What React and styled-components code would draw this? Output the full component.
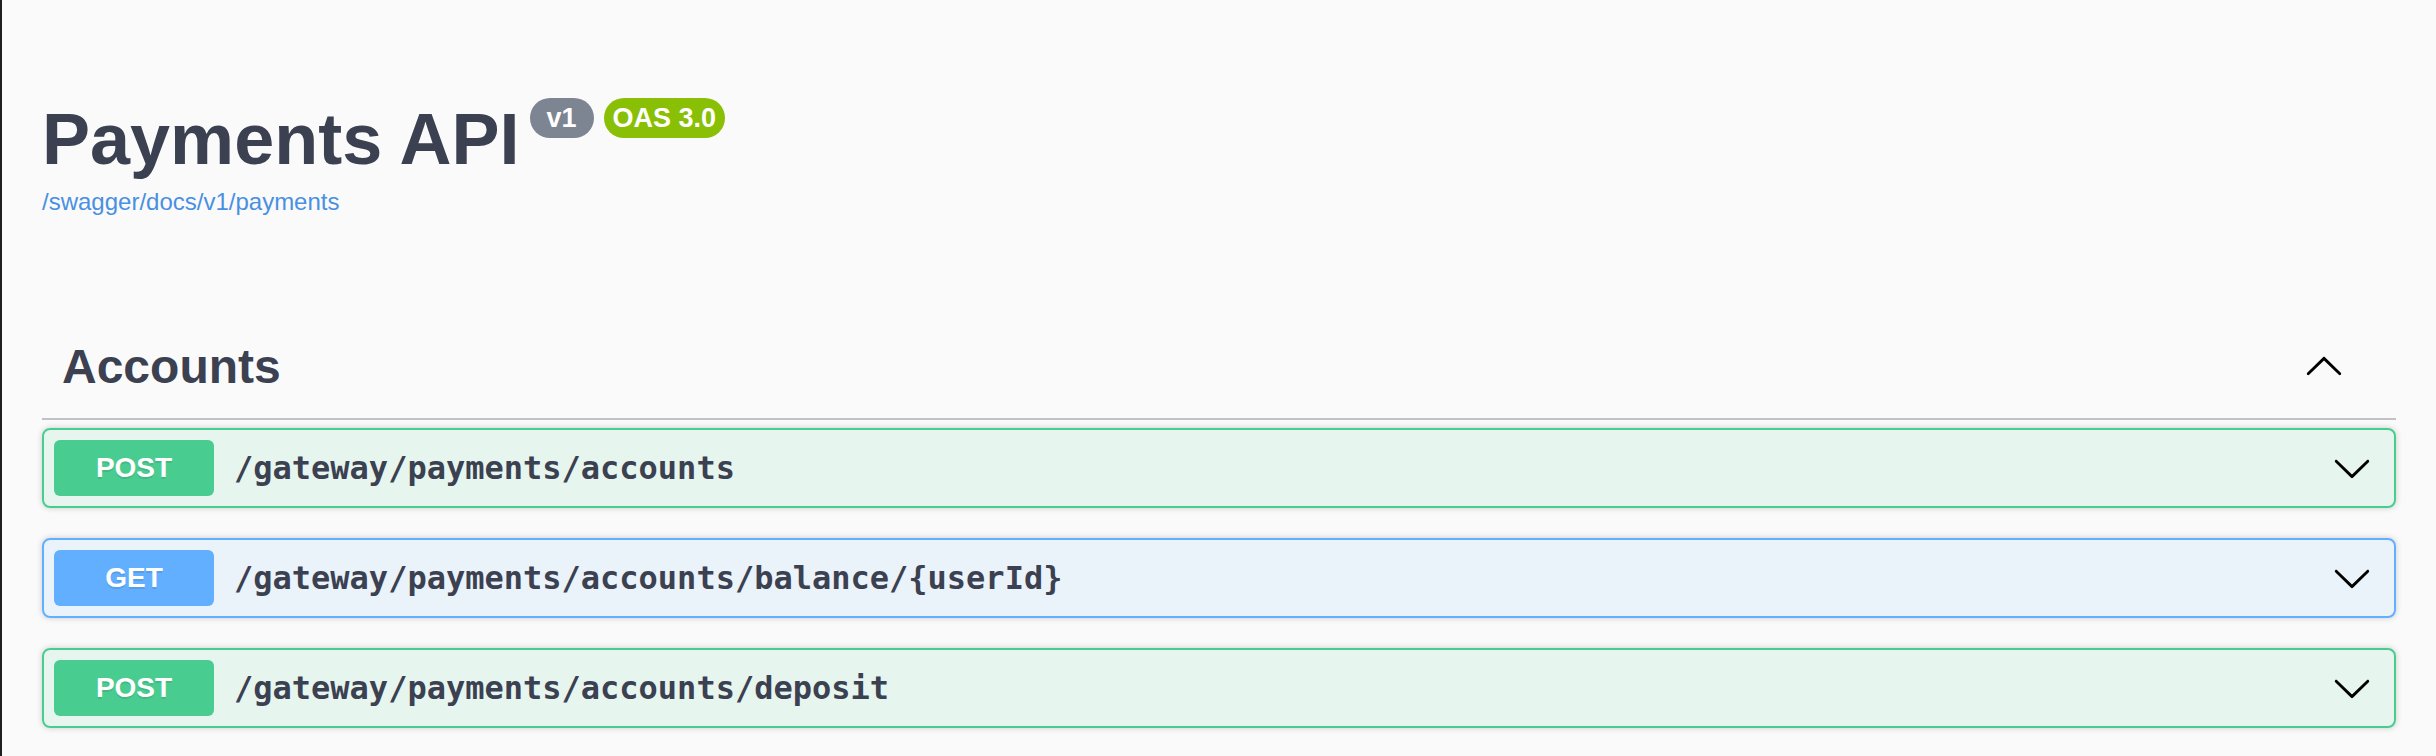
import React from 'react';
import styled, { createGlobalStyle } from 'styled-components';

const GlobalStyle = createGlobalStyle`
  html, body {
    margin: 0;
    padding: 0;
    background: #fafafa;
  }
  body {
    font-family: "Liberation Sans", Arial, sans-serif;
    color: #3b4151;
  }
`;

const operations = [
  { method: 'POST', path: '/gateway/payments/accounts' },
  { method: 'GET', path: '/gateway/payments/accounts/balance/{userId}' },
  { method: 'POST', path: '/gateway/payments/accounts/deposit' },
];

const methodColors = {
  POST: { main: '#49cc90', soft: 'rgba(73, 204, 144, 0.1)' },
  GET: { main: '#61affe', soft: 'rgba(97, 175, 254, 0.1)' },
};

const Arrow = ({ up }) => (
  <ArrowSvg viewBox="0 0 20 20" $up={up}>
    <path d="M17.418 6.109c.272-.268.709-.268.979 0s.271.701 0 .969l-7.908 7.83c-.27.268-.707.268-.979 0l-7.908-7.83c-.27-.268-.27-.701 0-.969.271-.268.709-.268.979 0L10 13.25l7.418-7.141z" />
  </ArrowSvg>
);

const App = () => {
  return (
    <Page>
      <GlobalStyle />
      <Wrapper>
        <Info>
          <Title>
            Payments API
            <Badge $bg="#7d8492" $pad="17px">v1</Badge>
            <Badge $bg="#89bf04" $pad="9px">OAS 3.0</Badge>
          </Title>
          <SpecLink href="#">/swagger/docs/v1/payments</SpecLink>
        </Info>

        <TagSection>
          <TagHeader>
            <TagName>Accounts</TagName>
            <ArrowButton>
              <Arrow up />
            </ArrowButton>
          </TagHeader>

          {operations.map((op) => (
            <OpBlock key={op.path} $color={methodColors[op.method]}>
              <Method $color={methodColors[op.method].main}>{op.method}</Method>
              <Path>{op.path}</Path>
              <ArrowButton>
                <Arrow />
              </ArrowButton>
            </OpBlock>
          ))}
        </TagSection>
      </Wrapper>
    </Page>
  );
};

const Page = styled.div`
  min-height: 100vh;
  border-left: 2px solid #1f1f1f;
  box-sizing: border-box;
`;

const Wrapper = styled.div`
  padding: 98px 40px 0 40px;
`;

const Info = styled.div`
  margin-bottom: 100px;
`;

const Title = styled.h2`
  display: flex;
  align-items: flex-start;
  margin: 0;
  font-size: 72px;
  line-height: 83px;
  font-weight: 700;
  color: #3b4151;
`;

const Badge = styled.small`
  margin-left: 10px;
  padding: 4px ${(p) => p.$pad};
  border-radius: 114px;
  background: ${(p) => p.$bg};
  color: #fff;
  font-size: 27px;
  line-height: 32px;
  font-weight: 700;
`;

const SpecLink = styled.a`
  display: block;
  margin-top: 7px;
  font-size: 24px;
  line-height: 28px;
  color: #4990e2;
  text-decoration: none;
`;

const TagSection = styled.div``;

const TagHeader = styled.div`
  display: flex;
  align-items: center;
  padding: 20px 40px 20px 20px;
  margin-bottom: 8px;
  border-bottom: 2px solid rgba(59, 65, 81, 0.3);
`;

const TagName = styled.h3`
  flex: 1;
  margin: 0;
  font-size: 48px;
  line-height: 62px;
  font-weight: 700;
  color: #3b4151;
`;

const ArrowButton = styled.button`
  display: flex;
  align-items: center;
  border: none;
  background: none;
  padding: 0 12px;
  cursor: pointer;
`;

const ArrowSvg = styled.svg`
  width: 40px;
  height: 40px;
  fill: #000;
  transform: ${(p) => (p.$up ? 'rotate(180deg)' : 'none')};
`;

const OpBlock = styled.div`
  display: flex;
  align-items: center;
  padding: 10px;
  margin-bottom: 30px;
  border: 2px solid ${(p) => p.$color.main};
  border-radius: 8px;
  background: ${(p) => p.$color.soft};
  box-shadow: 0 0 6px rgba(0, 0, 0, 0.19);
`;

const Method = styled.span`
  min-width: 160px;
  padding: 12px 0;
  border-radius: 6px;
  background: ${(p) => p.$color};
  color: #fff;
  font-size: 28px;
  line-height: 32px;
  font-weight: 700;
  text-align: center;
  text-shadow: 0 2px 0 rgba(0, 0, 0, 0.1);
`;

const Path = styled.span`
  flex: 1;
  padding: 0 20px;
  font-family: "DejaVu Sans Mono", "Liberation Mono", monospace;
  font-size: 32px;
  font-weight: 700;
  color: #3b4151;
`;

export default App;
